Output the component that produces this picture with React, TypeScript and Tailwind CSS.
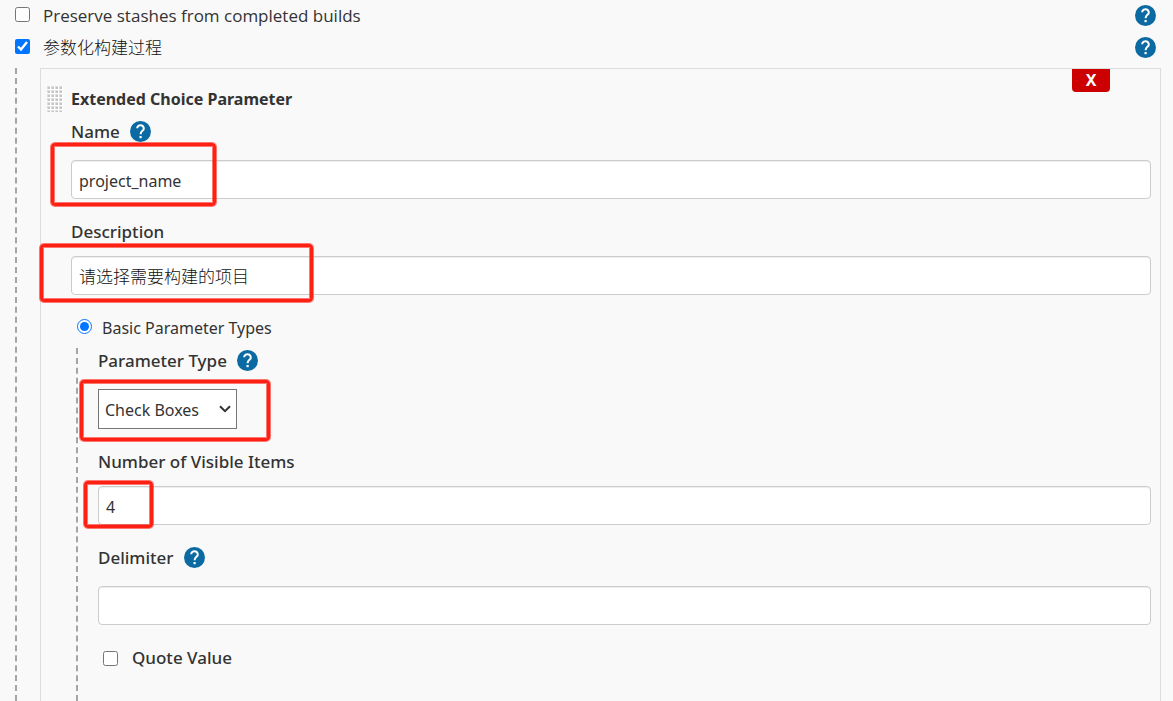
import { useId, useState, type ReactNode } from 'react';

function HelpButton({ topic }: Readonly<{ topic: string }>) {
  return (
    <button type="button" aria-label={`Help for feature: ${topic}`} className="mb-[2px] size-[21px] shrink-0">
      <svg viewBox="0 0 21 21" className="size-full" fill="none">
        <circle cx="10.5" cy="10.5" r="10.5" fill="#0b6aa2" />
        <path d="M7.2 7.3a3.3 3.1 0 1 1 5.5 2.3c-1.3 1.1-2.1 1.6-2.1 3.7" stroke="#fff" strokeWidth="2" />
        <rect x="9.5" y="15" width="2.2" height="2.2" fill="#fff" />
      </svg>
    </button>
  );
}

function Highlight({ className }: Readonly<{ className: string }>) {
  return (
    <div
      aria-hidden="true"
      className={`pointer-events-none absolute rounded-[4px] border-[3px] border-[#ff2014] shadow-[0_0_0_1px_rgba(255,32,20,0.6),inset_0_0_0_1px_rgba(255,32,20,0.6)] ${className}`}
    />
  );
}

function DragHandle() {
  return (
    <svg aria-hidden="true" viewBox="0 0 16 26" className="h-[26px] w-4 shrink-0">
      <defs>
        <pattern id="grip" width="4" height="4" patternUnits="userSpaceOnUse">
          <rect width="4" height="4" fill="#fff" />
          <rect width="3" height="3" fill="#ddd" />
          <rect x="1" y="1" width="2" height="2" fill="#c4c4c4" />
        </pattern>
      </defs>
      <rect width="16" height="26" fill="url(#grip)" />
    </svg>
  );
}

interface FieldProps {
  label: string;
  help?: boolean;
  highlight?: string;
  children: (id: string) => ReactNode;
}

function Field({ label, help, highlight, children }: Readonly<FieldProps>) {
  const id = useId();
  return (
    <div>
      <div className={`flex h-6 items-center gap-[10px] ${help ? 'mb-4' : 'mb-3'}`}>
        <label htmlFor={id} className="font-medium">{label}</label>
        {help && <HelpButton topic={label} />}
      </div>
      <div className="relative">
        {children(id)}
        {highlight && <Highlight className={highlight} />}
      </div>
    </div>
  );
}

interface TextFieldProps {
  label: string;
  initial?: string;
  help?: boolean;
  highlight?: string;
  large?: boolean;
}

function TextField({ label, initial = '', help, highlight, large }: Readonly<TextFieldProps>) {
  const [value, setValue] = useState(initial);
  return (
    <Field label={label} help={help} highlight={highlight}>
      {(id) => (
        <input
          id={id}
          type="text"
          value={value}
          onChange={(e) => setValue(e.target.value)}
          className={`block h-[39px] w-full rounded border border-[#ccc] bg-white px-[7px] shadow-[inset_0_1px_1px_rgba(0,0,0,0.075)] ${
            large ? 'text-[17px] font-light text-[#111]' : 'pt-[2px] text-base'
          }`}
        />
      )}
    </Field>
  );
}

export default function App() {
  const [type, setType] = useState('Check Boxes');

  return (
    <main className="flex min-h-screen flex-col bg-[#f9f9f9] pl-[15px] font-['Noto_Sans','Noto_Sans_CJK_SC',sans-serif] text-[17px] leading-6 text-[#333]">
      <div className="flex h-8 items-center pr-[17px]">
        <input id="stashes" type="checkbox" className="mr-[13px] mb-1 size-[15px]" />
        <label htmlFor="stashes" className="flex-1 font-['Open_Sans',sans-serif] font-medium">Preserve stashes from completed builds</label>
        <HelpButton topic="Preserve stashes" />
      </div>
      <div className="mb-1 flex h-8 items-center pr-[17px]">
        <input id="parameterized" type="checkbox" defaultChecked className="mr-[13px] mb-1 size-[15px]" />
        <label htmlFor="parameterized" className="flex-1 font-light text-[#111]">参数化构建过程</label>
        <HelpButton topic="参数化构建过程" />
      </div>

      <div className="flex flex-1 border-l-2 border-dashed border-[#a5a5a5] pr-3 pl-[23px]">
        <section className="relative flex flex-1 flex-col border border-b-0 border-[#ddd] pt-[17px] pr-[9px]">
          <button
            type="button"
            aria-label="Delete parameter"
            className="absolute top-0 right-[50px] h-[23px] w-[38px] rounded-b bg-[#c00] text-base leading-[23px] font-bold text-white"
          >
            X
          </button>
          <div className="mb-2 flex items-center gap-2 pl-[6px]">
            <DragHandle />
            <h2 className="text-base leading-6 font-bold">Extended Choice Parameter</h2>
          </div>

          <div className="flex flex-1 flex-col gap-[21px] pl-[30px]">
            <TextField label="Name" initial="project_name" help highlight="-top-[17px] -left-5 h-[63px] w-[165px]" />
            <TextField label="Description" initial="请选择需要构建的项目" large highlight="-top-3 -left-[31px] h-[58px] w-[273px]" />

            <div className="flex flex-1 flex-col">
              <div className="mb-2 flex h-6 items-center pl-[6px]">
                <input id="basic" type="radio" name="parameterTypes" defaultChecked className="mr-[10px] mb-1 size-[15px]" />
                <label htmlFor="basic" className="text-base">Basic Parameter Types</label>
              </div>

              <div className="ml-[5px] flex flex-1 flex-col gap-[21px] border-l-2 border-dashed border-[#a5a5a5] pt-px pl-5">
                <Field label="Parameter Type" help highlight="-top-[9px] -left-[18px] h-[61px] w-[190px]">
                  {(id) => (
                    <div className="relative w-[139px]">
                      <select
                        id={id}
                        value={type}
                        onChange={(e) => setType(e.target.value)}
                        className="block h-10 w-full appearance-none border border-[#767676] bg-white px-[6px] pt-[2px] text-base"
                      >
                        <option>Check Boxes</option>
                        <option>Single Select</option>
                        <option>Multi Select</option>
                        <option>Radio Buttons</option>
                      </select>
                      <svg aria-hidden="true" viewBox="0 0 12 8" className="pointer-events-none absolute top-4 right-[6px] h-2 w-3" fill="none">
                        <path d="M1 1.2l5 5 5-5" stroke="#333" strokeWidth="2" />
                      </svg>
                    </div>
                  )}
                </Field>
                <TextField label="Number of Visible Items" initial="4" highlight="-top-[5px] -left-[14px] h-[47px] w-[69px]" />
                <TextField label="Delimiter" help />
                <div className="flex h-6 items-center pl-[5px]">
                  <input id="quote" type="checkbox" className="mr-[14px] size-[15px]" />
                  <label htmlFor="quote" className="font-medium">Quote Value</label>
                </div>
              </div>
            </div>
          </div>
        </section>
      </div>
    </main>
  );
}
